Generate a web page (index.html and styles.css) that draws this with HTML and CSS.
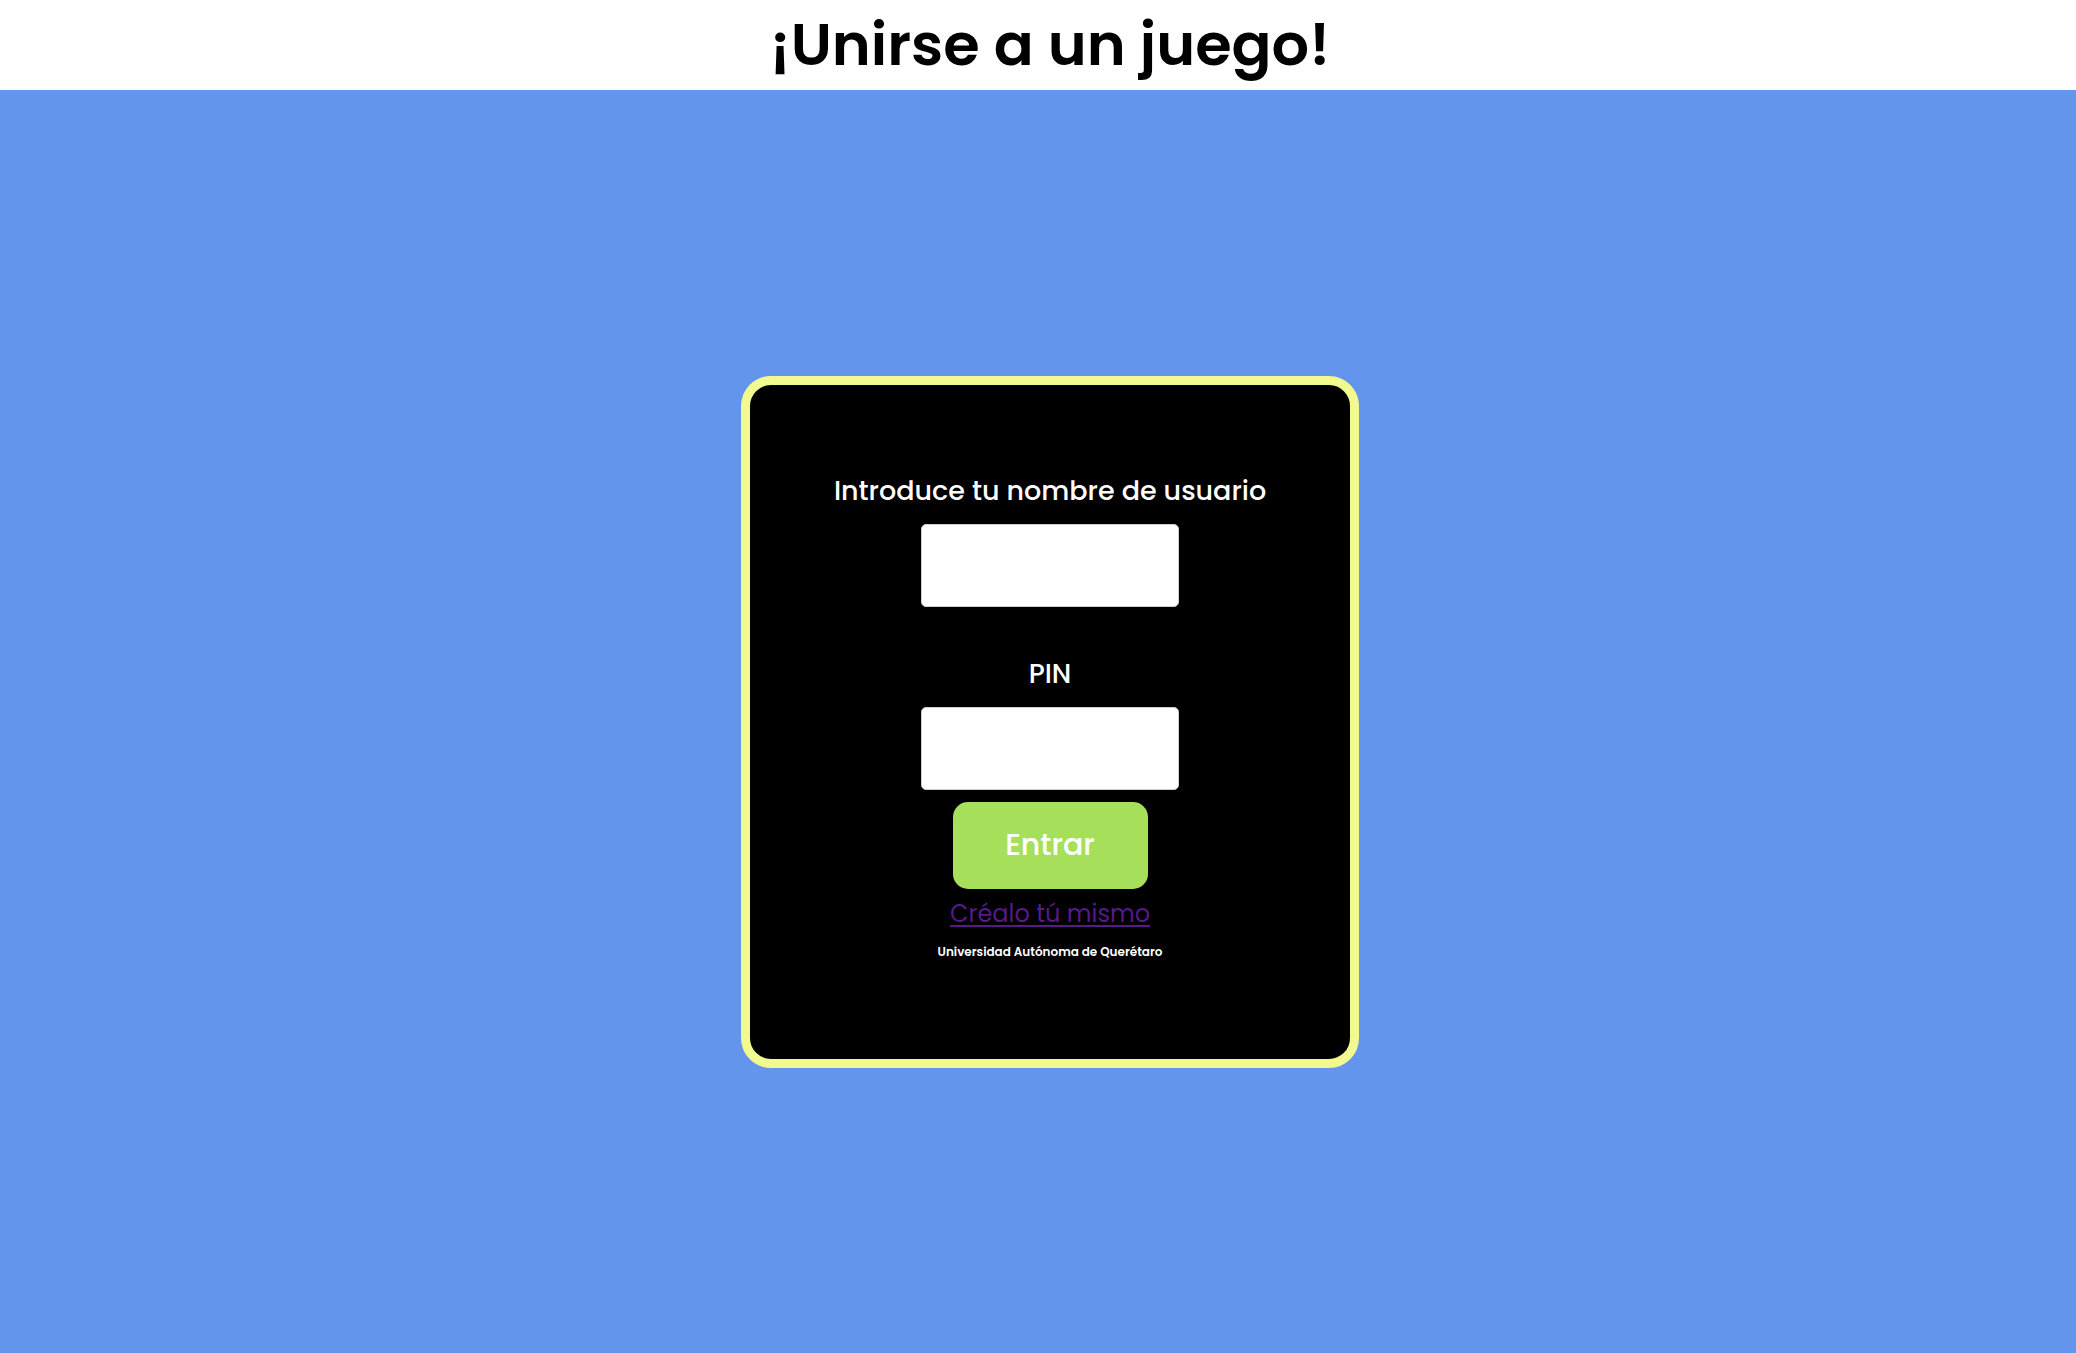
FILE: index.html
```html
<!DOCTYPE html>
<html lang="es">
<head>
<meta charset="utf-8">
<title>¡Unirse a un juego!</title>
<link rel="stylesheet" href="styles.css">
</head>
<body>
<header class="top">
  <h1 class="title">¡Unirse a un juego!</h1>
</header>
<main class="stage">
  <form class="card" onsubmit="return false">
    <label class="label label-user" for="user">Introduce tu nombre de usuario</label>
    <input class="field field-user" id="user" type="text">
    <label class="label label-pin" for="pin">PIN</label>
    <input class="field field-pin" id="pin" type="text">
    <button class="enter" type="submit">Entrar</button>
    <a class="create" href="#">Créalo tú mismo</a>
    <p class="credit">Universidad Autónoma de Querétaro</p>
  </form>
</main>
</body>
</html>
```

FILE: styles.css
```css
* { box-sizing: border-box; }

html, body {
  margin: 0;
  height: 100%;
}

body {
  font-family: "Poppins", "Inter", "Noto Sans", sans-serif;
  display: flex;
  flex-direction: column;
  background: #6495ed;
}

.top {
  height: 90px;
  flex: none;
  background: #ffffff;
  display: flex;
  align-items: center;
  justify-content: center;
  padding-left: 24px;
}

.title {
  margin: 0;
  font-size: 59px;
  line-height: 70px;
  font-weight: 600;
  color: #000;
}

.stage {
  flex: 1;
  display: flex;
  align-items: center;
  justify-content: center;
  padding-left: 24px;
}

.card {
  width: 618px;
  height: 692px;
  background: #000;
  border: 9px solid #f2f98e;
  border-radius: 30px;
  display: flex;
  flex-direction: column;
  align-items: center;
  padding-top: 91px;
}

.label {
  color: #fff;
  font-weight: 500;
  display: block;
  font-size: 27px;
  line-height: 30px;
}

.label-user {
  margin-bottom: 18px;
}

.label-pin {
  margin-top: 52px;
  margin-bottom: 18px;
}

.field {
  width: 258px;
  height: 83px;
  background: #fff;
  border: 1px solid #cfcfcf;
  border-radius: 5px;
  font: inherit;
  font-size: 20px;
  padding: 0 12px;
  outline: none;
}

.enter {
  margin-top: 12px;
  width: 195px;
  height: 87px;
  background: #a6e05a;
  border: none;
  border-radius: 15px;
  color: #fff;
  font-family: inherit;
  font-size: 30px;
  font-weight: 500;
  cursor: pointer;
}

.create {
  margin-top: 10px;
  font-size: 24px;
  line-height: 30px;
  color: #551a8b;
  text-decoration: underline;
  text-underline-offset: 3px;
}

.credit {
  margin: 15px 0 0;
  font-size: 12px;
  line-height: 16px;
  font-weight: 600;
  color: #fff;
}
```
